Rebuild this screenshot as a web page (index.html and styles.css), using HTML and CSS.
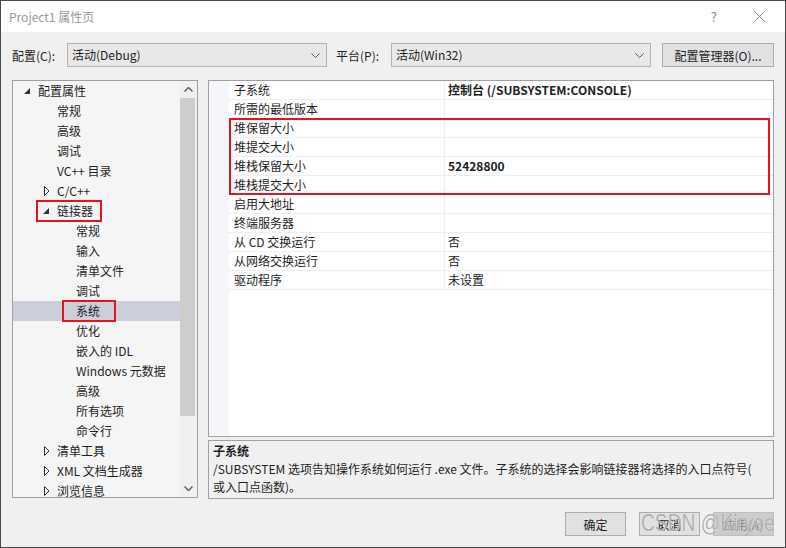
FILE: index.html
```html
<!DOCTYPE html>
<html lang="zh-CN">
<head>
    <meta charset="UTF-8">
    <title>Project1 属性页</title>
    <link rel="stylesheet" href="styles.css">
</head>
<body>
<div class="window">
    <div class="titlebar">
        <span class="title">Project1 属性页</span>
        <span class="help">?</span>
        <svg class="close" width="11" height="11" viewBox="0 0 11 11"><path d="M0.5 0.5 L10.5 10.5 M10.5 0.5 L0.5 10.5" stroke="#8a8a8a" stroke-width="1" fill="none"/></svg>
    </div>

    <div class="content">
        <div class="config-row">
            <span class="cfg-label">配置(C):</span>
            <div class="combo combo-cfg">活动(Debug)<svg class="chev" width="9" height="5" viewBox="0 0 9 5"><path d="M0.5 0.5 L4.5 4.5 L8.5 0.5" stroke="#555" fill="none"/></svg></div>
            <span class="cfg-label plat">平台(P):</span>
            <div class="combo combo-plat">活动(Win32)<svg class="chev" width="9" height="5" viewBox="0 0 9 5"><path d="M0.5 0.5 L4.5 4.5 L8.5 0.5" stroke="#555" fill="none"/></svg></div>
            <button class="btn btn-mgr">配置管理器(O)...</button>
        </div>

        <div class="main">
            <div class="tree">
                <ul class="tree-list">
                    <li class="lvl0"><svg class="arr" width="6" height="6" viewBox="0 0 6 6"><polygon points="6,0 6,6 0,6" fill="#333"/></svg>配置属性</li>
                    <li class="lvl1">常规</li>
                    <li class="lvl1">高级</li>
                    <li class="lvl1">调试</li>
                    <li class="lvl1">VC++ 目录</li>
                    <li class="lvl1"><svg class="arr open" width="6" height="10" viewBox="0 0 6 10"><polygon points="0.5,0.5 5,5 0.5,9.5" fill="none" stroke="#333"/></svg>C/C++</li>
                    <li class="lvl1"><span class="mark mark-linker"><svg class="arr" width="6" height="6" viewBox="0 0 6 6"><polygon points="6,0 6,6 0,6" fill="#333"/></svg>链接器</span></li>
                    <li class="lvl2">常规</li>
                    <li class="lvl2">输入</li>
                    <li class="lvl2">清单文件</li>
                    <li class="lvl2">调试</li>
                    <li class="lvl2 selected"><span class="mark mark-sys">系统</span></li>
                    <li class="lvl2">优化</li>
                    <li class="lvl2">嵌入的 IDL</li>
                    <li class="lvl2">Windows 元数据</li>
                    <li class="lvl2">高级</li>
                    <li class="lvl2">所有选项</li>
                    <li class="lvl2">命令行</li>
                    <li class="lvl1"><svg class="arr open" width="6" height="10" viewBox="0 0 6 10"><polygon points="0.5,0.5 5,5 0.5,9.5" fill="none" stroke="#333"/></svg>清单工具</li>
                    <li class="lvl1"><svg class="arr open" width="6" height="10" viewBox="0 0 6 10"><polygon points="0.5,0.5 5,5 0.5,9.5" fill="none" stroke="#333"/></svg>XML 文档生成器</li>
                    <li class="lvl1"><svg class="arr open" width="6" height="10" viewBox="0 0 6 10"><polygon points="0.5,0.5 5,5 0.5,9.5" fill="none" stroke="#333"/></svg>浏览信息</li>
                </ul>
                <div class="scrollbar">
                    <div class="sb-arrow"><svg width="9" height="5" viewBox="0 0 9 5"><path d="M0.5 4.5 L4.5 0.5 L8.5 4.5" stroke="#606060" stroke-width="1.5" fill="none"/></svg></div>
                    <div class="sb-track"><div class="sb-thumb"></div></div>
                    <div class="sb-arrow"><svg width="9" height="5" viewBox="0 0 9 5"><path d="M0.5 0.5 L4.5 4.5 L8.5 0.5" stroke="#606060" stroke-width="1.5" fill="none"/></svg></div>
                </div>
            </div>

            <div class="right">
                <div class="grid">
                    <div class="row"><span class="name">子系统</span><span class="val bold">控制台 (/SUBSYSTEM:CONSOLE)</span></div>
                    <div class="row"><span class="name">所需的最低版本</span><span class="val"></span></div>
                    <div class="group">
                        <div class="row"><span class="name">堆保留大小</span><span class="val"></span></div>
                        <div class="row"><span class="name">堆提交大小</span><span class="val"></span></div>
                        <div class="row"><span class="name">堆栈保留大小</span><span class="val bold">52428800</span></div>
                        <div class="row"><span class="name">堆栈提交大小</span><span class="val"></span></div>
                    </div>
                    <div class="row"><span class="name">启用大地址</span><span class="val"></span></div>
                    <div class="row"><span class="name">终端服务器</span><span class="val"></span></div>
                    <div class="row"><span class="name">从 CD 交换运行</span><span class="val">否</span></div>
                    <div class="row"><span class="name">从网络交换运行</span><span class="val">否</span></div>
                    <div class="row"><span class="name">驱动程序</span><span class="val">未设置</span></div>
                </div>
                <div class="desc">
                    <div class="desc-title">子系统</div>
                    <div class="desc-text">/SUBSYSTEM 选项告知操作系统如何运行 .exe 文件。子系统的选择会影响链接器将选择的入口点符号(<br>或入口点函数)。</div>
                </div>
            </div>
        </div>

        <div class="buttons">
            <button class="btn">确定</button>
            <button class="btn">取消</button>
            <button class="btn disabled">应用(A)</button>
        </div>
    </div>

    <div class="watermark">CSDN @Kiryee</div>
</div>
</body>
</html>
```

FILE: styles.css
```css
* {
    box-sizing: border-box;
}
body {
    margin: 0;
    font-family: "Noto Sans CJK SC", "Noto Sans", sans-serif;
    font-size: 12px;
    color: #1e1e1e;
    background-color: #f0f0f0;
}
.window {
    position: relative;
    width: 786px;
    height: 548px;
    border: 1px solid #4a4a4a;
    background-color: #f0f0f0;
    overflow: hidden;
}
.titlebar {
    height: 31px;
    background-color: #fff;
    display: flex;
    align-items: center;
    padding-left: 8px;
}
.title {
    flex: 1;
    color: #999;
    font-size: 12px;
}
.help {
    color: #8a8a8a;
    font-size: 13px;
    margin-right: 37px;
}
.close {
    margin-right: 20px;
}
.content {
    padding: 11px 11px 0 11px;
}
.config-row {
    display: flex;
    align-items: center;
    height: 24px;
}
.cfg-label {
    width: 55px;
}
.cfg-label.plat {
    width: 55px;
    margin-left: 9px;
}
.combo {
    position: relative;
    height: 24px;
    border: 1px solid #b4b4b4;
    background-color: #e8e8e8;
    padding-left: 4px;
    line-height: 22px;
}
.combo-cfg {
    width: 260px;
}
.combo-plat {
    width: 260px;
}
.chev {
    position: absolute;
    right: 6px;
    top: 9px;
}
.btn {
    font-family: inherit;
    font-size: 12px;
    color: #1e1e1e;
    height: 24px;
    border: 1px solid #adadad;
    background-color: #e1e1e1;
    padding: 0;
}
.btn-mgr {
    width: 112px;
    margin-left: 11px;
}
.main {
    display: flex;
    margin-top: 13px;
    gap: 10px;
}
.tree {
    width: 186px;
    height: 418px;
    border: 1px solid #a0a0a0;
    background-color: #f5f5f5;
    display: flex;
}
.tree-list {
    list-style: none;
    margin: 0;
    padding: 0;
    width: 167px;
    overflow: hidden;
}
.tree-list li {
    position: relative;
    height: 20px;
    line-height: 20px;
    white-space: nowrap;
}
.lvl0 {
    padding-left: 25px;
}
.lvl1 {
    padding-left: 44px;
}
.lvl2 {
    padding-left: 63px;
}
.arr {
    position: absolute;
    top: 7px;
    margin-left: -14px;
}
.arr.open {
    top: 5px;
    margin-left: -13px;
}
.selected {
    background-color: #cccedb;
}
.mark {
    position: relative;
    display: inline-block;
}
.mark::after {
    content: "";
    position: absolute;
    border: 2px solid #e3141e;
}
.mark-linker::after {
    left: -21px;
    right: -9px;
    top: -1px;
    bottom: -1px;
}
.mark-sys::after {
    left: -14px;
    right: -16px;
    top: -1px;
    bottom: -1px;
}
.scrollbar {
    width: 17px;
    display: flex;
    flex-direction: column;
    background-color: #f0f0f0;
}
.sb-arrow {
    height: 17px;
    display: flex;
    align-items: center;
    justify-content: center;
}
.sb-track {
    flex: 1;
}
.sb-thumb {
    width: 15px;
    height: 318px;
    background-color: #cdcdcd;
}
.right {
    width: 566px;
    display: flex;
    flex-direction: column;
}
.grid {
    height: 357px;
    border: 1px solid #a0a0a0;
    padding-left: 20px;
    background-image: linear-gradient(to right, #f5f6fa 20px, #fff 20px);
}
.row {
    display: flex;
    height: 19px;
    line-height: 18px;
    border-bottom: 1px solid #eceef4;
    background-color: #fff;
}
.name {
    width: 216px;
    padding-left: 5px;
    border-right: 1px solid #eceef4;
}
.val {
    flex: 1;
    padding-left: 3px;
}
.bold {
    font-weight: bold;
}
.group {
    position: relative;
}
.group::after {
    content: "";
    position: absolute;
    left: 0;
    right: 3px;
    top: -1px;
    bottom: 0;
    border: 2px solid #e3141e;
}
.desc {
    margin-top: 3px;
    height: 59px;
    border: 1px solid #a0a0a0;
    background-color: #f0f0f0;
    padding: 1px 4px 0 4px;
    line-height: 18px;
}
.desc-title {
    font-weight: bold;
}
.buttons {
    display: flex;
    justify-content: flex-end;
    gap: 13px;
    margin-top: 13px;
}
.buttons .btn {
    width: 61px;
    height: 24px;
}
.btn.disabled {
    background-color: #cccccc;
    border-color: #bfbfbf;
    color: #838383;
}
.watermark {
    position: absolute;
    left: 640px;
    top: 508px;
    font-family: "Liberation Sans", Arial, sans-serif;
    font-size: 24px;
    color: rgba(150, 150, 150, 0.75);
    text-shadow: 0 0 1px #fff;
    white-space: nowrap;
    transform: scaleX(0.8);
    transform-origin: left top;
}
```
